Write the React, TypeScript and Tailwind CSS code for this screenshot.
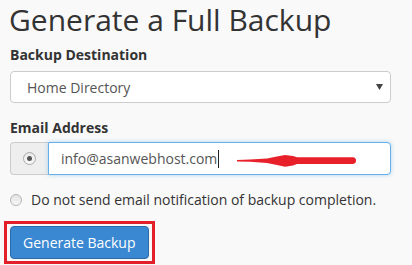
export default function App() {
  return (
    <div className="min-h-screen bg-[#f9f9f9] pl-[10px] pt-[3px] font-['Open_Sans',sans-serif] text-[#333]">
      <h1 className="-ml-[1px] text-[30px] leading-[34px] font-normal">Generate a Full Backup</h1>

      <label className="mt-[8px] block text-[14px] font-bold leading-[20px]">Backup Destination</label>
      <div className="mt-[6px] flex h-[32px] w-[381px] items-center justify-between rounded-[4px] border border-[#ccc] bg-white pl-[16px] pr-[7px] text-[14px] text-[#555]">
        <span>Home Directory</span>
        <svg width="7" height="6" viewBox="0 0 7 6">
          <path d="M0 0 L7 0 L3.5 6 Z" fill="#444" />
        </svg>
      </div>

      <label className="mt-[15px] block text-[14px] font-bold leading-[20px]">Email Address</label>
      <div className="mt-[4px] flex h-[33px] w-[381px]">
        <div className="flex w-[38px] items-center justify-center rounded-l-[4px] border border-r-0 border-[#ccc] bg-[#eee]">
          <span className="flex h-[13px] w-[13px] items-center justify-center rounded-full border border-[#a9a9a9] bg-gradient-to-b from-[#e8e8e8] to-[#fafafa]">
            <span className="h-[5px] w-[5px] rounded-full bg-[#555]" />
          </span>
        </div>
        <div className="relative flex flex-1 items-center rounded-r-[4px] border border-[#66afe9] bg-white pl-[12px] text-[14px] text-[#555] shadow-[0_0_4px_rgba(102,175,233,0.5)]">
          <span>info@asanwebhost.com</span>
          <span className="ml-[1px] h-[18px] w-px bg-[#222]" />
          {/* hand-drawn red arrow annotation */}
          <svg className="absolute left-[188px] top-[10px]" width="120" height="16" viewBox="0 0 120 16">
            <path
              d="M0 7 L13 6.6 L30 5.4 L40 3.5 L48 2 L56 3 L60 4.3 L116 4.3 Q119 4.5 119 7.6 Q119 10.8 116 11 L60 11 L56 12.5 L48 13.7 L40 12 L30 10 L13 8.8 L0 8.5 Z"
              fill="#e8202a"
            />
          </svg>
        </div>
      </div>

      <label className="mt-[15px] flex items-center text-[14px] leading-[20px] text-[#333]">
        <span className="h-[12px] w-[12px] rounded-full border border-[#b5b5b5] bg-gradient-to-b from-[#e4e4e4] to-[#f7f7f7]" />
        <span className="ml-[9px]">Do not send email notification of backup completion.</span>
      </label>

      <div className="-ml-[6px] mt-[11px] w-fit border-[3px] border-[#e3202a] px-[3px] py-[2px]">
        <button
          type="button"
          className="h-[33px] rounded-[4px] border border-[#2c6aa8] bg-[#3a88d2] px-[12px] text-[14px] leading-[20px] text-white"
        >
          Generate Backup
        </button>
      </div>
    </div>
  );
}
